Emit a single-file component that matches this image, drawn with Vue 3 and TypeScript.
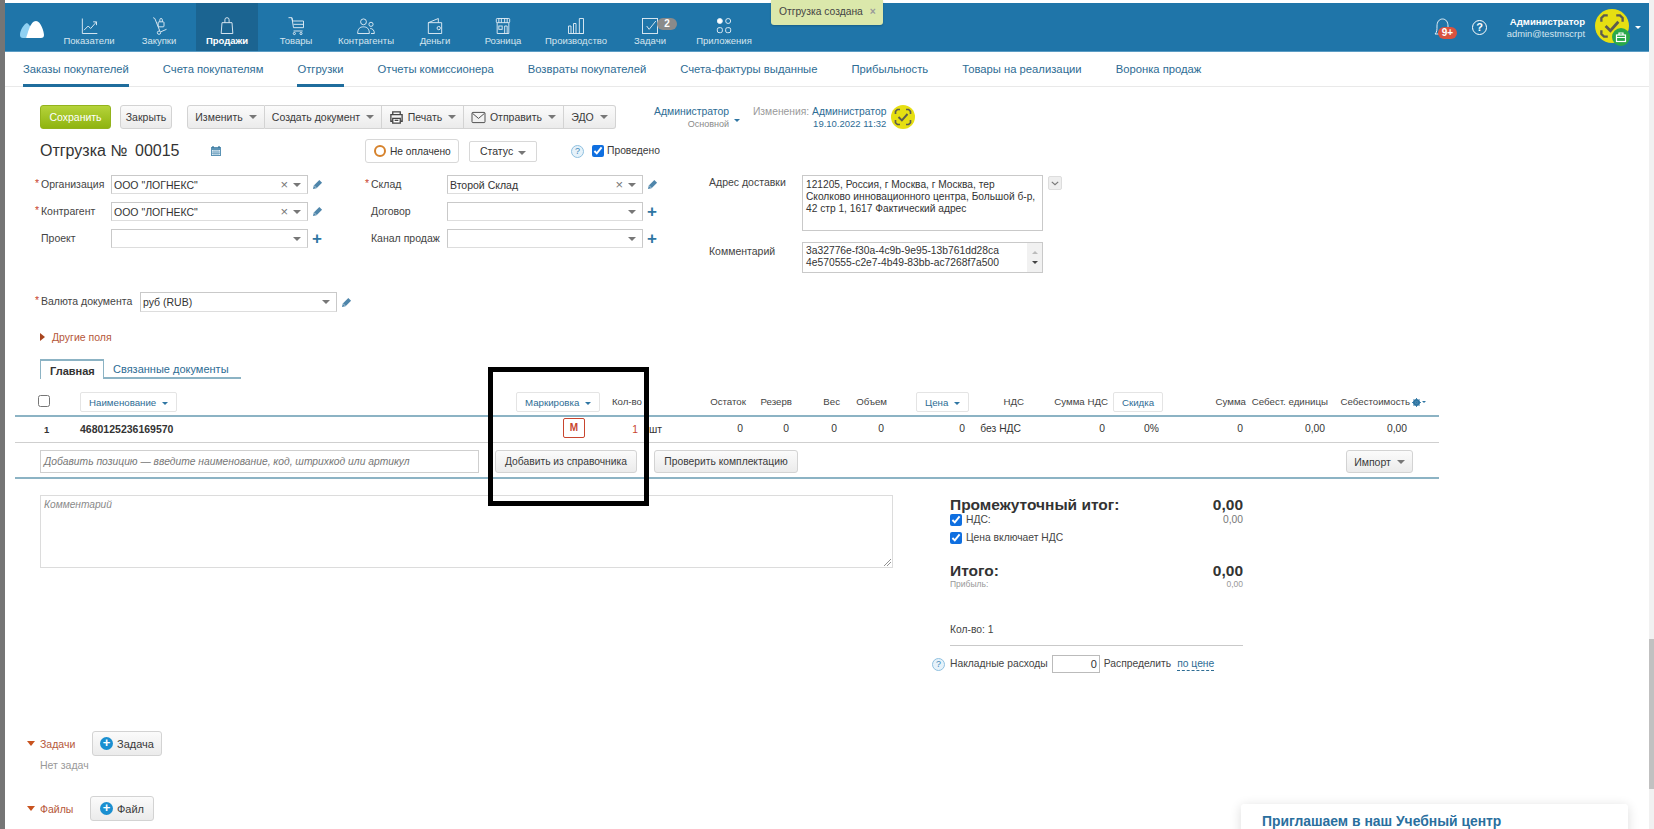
<script setup lang="ts">
const navItems = [
  { label: 'Показатели', icon: 'chart' },
  { label: 'Закупки', icon: 'truck' },
  { label: 'Продажи', icon: 'bag', active: true },
  { label: 'Товары', icon: 'cart' },
  { label: 'Контрагенты', icon: 'people' },
  { label: 'Деньги', icon: 'wallet' },
  { label: 'Розница', icon: 'store' },
  { label: 'Производство', icon: 'factory' },
  { label: 'Задачи', icon: 'task', badge: '2' },
  { label: 'Приложения', icon: 'apps' },
]
const subTabs = [
  { label: 'Заказы покупателей', active: true },
  { label: 'Счета покупателям' },
  { label: 'Отгрузки', active: true },
  { label: 'Отчеты комиссионера' },
  { label: 'Возвраты покупателей' },
  { label: 'Счета-фактуры выданные' },
  { label: 'Прибыльность' },
  { label: 'Товары на реализации' },
  { label: 'Воронка продаж' },
]
const leftFields = [
  { label: 'Организация', req: true, value: 'ООО "ЛОГНЕКС"', clear: true, action: 'edit' },
  { label: 'Контрагент', req: true, value: 'ООО "ЛОГНЕКС"', clear: true, action: 'edit' },
  { label: 'Проект', req: false, value: '', clear: false, action: 'add' },
]
const midFields = [
  { label: 'Склад', req: true, value: 'Второй Склад', clear: true, action: 'edit' },
  { label: 'Договор', req: false, value: '', clear: false, action: 'add' },
  { label: 'Канал продаж', req: false, value: '', clear: false, action: 'add' },
]
const rowCells = [
  { text: '0' }, { text: '0' }, { text: '0' }, { text: '0' }, { text: '0' }, { text: 'без НДС' },
  { text: '0' }, { text: '0%' }, { text: '0' }, { text: '0,00' }, { text: '0,00' },
]
</script>

<template>
  <div class="frame">
    <div class="edge"></div>
    <div class="main">
      <header class="topbar">
        <svg class="logo" viewBox="0 0 24 18" width="24" height="18">
          <path d="M0 15C0 10 4 4 7 3c2 1 3 3 4 5-2 4-3 8-5 10H3c-2 0-3-1-3-3z" fill="#8fd0f2" />
          <path d="M6 18c2-4 4-17 10-17 5 0 8 11 8 14 0 2-1 3-3 3z" fill="#fff" />
        </svg>
        <nav class="nav">
          <a v-for="item in navItems" :key="item.label" class="nav-item" :class="{ active: item.active }">
            <span class="nav-icon">
              <svg viewBox="0 0 24 24" width="20" height="20" fill="none" stroke="#e4eff6" stroke-width="1.100">
                <template v-if="item.icon === 'chart'">
                  <path d="M4 3v18h18" /><path d="M6 17l5-5 3 3 7-8M17 7h4v4" />
                </template>
                <template v-else-if="item.icon === 'truck'">
                  <path d="M5 2l2 1 6 15" /><circle cx="12" cy="20" r="2" /><path d="M14 19l7-3" />
                  <rect x="11" y="7" width="7" height="6" rx="1" /><path d="M13 7V4.500a1.500 1.500 0 0 1 3 0V7" />
                </template>
                <template v-else-if="item.icon === 'bag'">
                  <path d="M6 8h12l1 13H5z" /><path d="M9.500 8V4.500a2.500 2.500 0 0 1 5 0V8" />
                </template>
                <template v-else-if="item.icon === 'cart'">
                  <path d="M3 2h4l1 4h13v8H9L7 2" /><path d="M9 10h12M9 18h11" /><circle cx="10" cy="21" r="1.300" /><circle cx="18" cy="21" r="1.300" />
                </template>
                <template v-else-if="item.icon === 'people'">
                  <circle cx="9" cy="7" r="3.500" /><path d="M2 21c0-6 3-8 7-8s7 2 7 8z" />
                  <circle cx="18" cy="10" r="2.500" /><path d="M17 15c3 0 5 2 5 6h-4" />
                </template>
                <template v-else-if="item.icon === 'wallet'">
                  <path d="M4 8l12-5v5M4 8h16v13H4z" /><circle cx="16.500" cy="14.500" r="2" />
                </template>
                <template v-else-if="item.icon === 'store'">
                  <rect x="4" y="3" width="16" height="5" rx="1" /><path d="M7 3v5M10 3v5M14 3v5M17 3v5M5 8v13h14V8" />
                  <rect x="7" y="12" width="4" height="4" /><path d="M14 21v-9h3v9" />
                </template>
                <template v-else-if="item.icon === 'factory'">
                  <path d="M3 21V12h3v9M9 21V9h3v12M16 21V3h5v18zM3 21h18" />
                </template>
                <template v-else-if="item.icon === 'task'">
                  <rect x="3" y="3" width="18" height="18" /><path d="M8 12l3 4 8-10" />
                </template>
                <template v-else>
                  <circle cx="7" cy="6" r="3" fill="#fff" /><circle cx="17" cy="6" r="3" /><rect x="4" y="14" width="6" height="6" rx="2" /><rect x="14" y="14" width="6" height="6" rx="2" />
                </template>
              </svg>
              <span v-if="item.badge" class="nav-badge">{{ item.badge }}</span>
            </span>
            <span class="nav-label">{{ item.label }}</span>
          </a>
        </nav>
        <div class="user-area">
          <span class="bell">
            <svg viewBox="0 0 20 24" width="20" height="24" fill="none" stroke="#e4eff6" stroke-width="1">
              <path d="M2 19c2-2 2-4 2-8 0-4 2-7 5.500-7s5.500 3 5.500 7c0 4 0 6 2 8z" />
            </svg>
            <span class="bell-badge">9+</span>
          </span>
          <span class="help-white">?</span>
          <div class="user-text">
            <div class="user-name">Администратор</div>
            <div class="user-mail">admin@testmscrpt</div>
          </div>
          <span class="avatar-wrap">
            <svg viewBox="0 0 32 32" width="34" height="34">
              <circle cx="16" cy="16" r="16" fill="#e6df12" />
              <path d="M6 12V8.500L8.500 6H12M20 6h3.500L26 8.500V12M26 20v3.500L23.500 26H20M12 26H8.500L6 23.500V20" fill="none" stroke="#5c5c50" stroke-width="2.200" />
              <path d="M10 16l4.500 4.500L22 12" fill="none" stroke="#5c5c50" stroke-width="2.600" />
            </svg>
            <span class="gift">
              <svg viewBox="0 0 12 12" width="12" height="12" fill="none" stroke="#fff" stroke-width="1.200">
                <rect x="1.500" y="4" width="9" height="6.500" /><path d="M1.500 6.500h9M4 4V2h4v2" />
              </svg>
            </span>
          </span>
          <span class="caret-white"></span>
        </div>
      </header>

      <div class="subnav">
        <a v-for="t in subTabs" :key="t.label" class="subtab" :class="{ on: t.active }">{{ t.label }}</a>
      </div>

      <div class="toolbar">
        <button class="btn save">Сохранить</button>
        <button class="btn close">Закрыть</button>
        <div class="btn-group">
          <button class="btn seg w-change">Изменить <i class="tri"></i></button>
          <button class="btn seg w-create">Создать документ <i class="tri"></i></button>
          <button class="btn seg w-print">
            <svg viewBox="0 0 16 16" width="15" height="15" fill="none" stroke="#444" stroke-width="1.400">
              <path d="M4 5V2h8v3M4 12H2V5h12v7h-2" /><path d="M4 9h8v5H4z" fill="#fff" /><path d="M6 11h4" />
            </svg>
            Печать <i class="tri"></i>
          </button>
          <button class="btn seg w-send">
            <svg viewBox="0 0 16 14" width="15" height="13" fill="none" stroke="#444" stroke-width="1">
              <rect x="1" y="1.500" width="14" height="11" rx="1" /><path d="M1.500 2.500L8 8l6.500-5.500" />
            </svg>
            Отправить <i class="tri"></i>
          </button>
          <button class="btn seg w-edo">ЭДО <i class="tri"></i></button>
        </div>
        <div class="owner">
          <div class="link">Администратор</div>
          <div class="small">Основной</div>
        </div>
        <span class="caret-blue"></span>
        <div class="changes">
          <div><span class="gray">Изменения:</span> <span class="link">Администратор</span></div>
          <div class="date">19.10.2022 11:32</div>
        </div>
        <svg class="mini-avatar" viewBox="0 0 32 32" width="24" height="24">
          <circle cx="16" cy="16" r="16" fill="#e6df12" />
          <path d="M6 12V8.500L8.500 6H12M20 6h3.500L26 8.500V12M26 20v3.500L23.500 26H20M12 26H8.500L6 23.500V20" fill="none" stroke="#5c5c50" stroke-width="2.200" />
          <path d="M10 16l4.500 4.500L22 12" fill="none" stroke="#5c5c50" stroke-width="2.600" />
        </svg>
      </div>

      <div class="title-row">
        <div class="doc-title">Отгрузка №</div>
        <div class="doc-num">00015</div>
        <svg class="cal" viewBox="0 0 12 12" width="12" height="12">
          <path d="M1 2h10v9H1z" fill="#5b93b5" /><path d="M3 1v2M9 1v2" stroke="#2f6f95" stroke-width="1.200" />
          <path d="M2 5h8v5H2z" fill="#dcebf4" /><path d="M4 5v5M6 5v5M8 5v5M2 7h8M2 8.500h8" stroke="#5b93b5" stroke-width=".6" />
        </svg>
        <button class="pay"><i class="ring"></i>Не оплачено</button>
        <button class="status">Статус <i class="tri"></i></button>
        <span class="help">?</span>
        <input class="chk post-chk" type="checkbox" checked />
        <span class="posted">Проведено</span>
      </div>

      <div class="form">
        <div class="col-left">
          <div v-for="f in leftFields" :key="f.label" class="frow">
            <label class="flabel"><i v-if="f.req" class="star">*</i>{{ f.label }}</label>
            <div class="select">
              <span class="val">{{ f.value }}</span>
              <span v-if="f.clear" class="x">×</span>
              <i class="tri"></i>
            </div>
            <svg v-if="f.action === 'edit'" class="act" viewBox="0 0 12 12" width="11" height="11">
              <path d="M1 11l1-4 6-6 3 3-6 6z" fill="#4f86ab" /><path d="M2 7l3 3" stroke="#fff" stroke-width=".6" />
            </svg>
            <span v-else class="plus">+</span>
          </div>
        </div>
        <div class="col-mid">
          <div v-for="f in midFields" :key="f.label" class="frow">
            <label class="flabel"><i v-if="f.req" class="star">*</i>{{ f.label }}</label>
            <div class="select">
              <span class="val">{{ f.value }}</span>
              <span v-if="f.clear" class="x">×</span>
              <i class="tri"></i>
            </div>
            <svg v-if="f.action === 'edit'" class="act" viewBox="0 0 12 12" width="11" height="11">
              <path d="M1 11l1-4 6-6 3 3-6 6z" fill="#4f86ab" /><path d="M2 7l3 3" stroke="#fff" stroke-width=".6" />
            </svg>
            <span v-else class="plus">+</span>
          </div>
        </div>
        <div class="col-right">
          <div class="rrow addr">
            <label class="rlabel">Адрес доставки</label>
            <div class="area">121205, Россия, г Москва, г Москва, тер Сколково инновационного центра, Большой б-р, 42 стр 1, 1617 Фактический адрес</div>
            <button class="mini-down"><svg viewBox="0 0 10 6" width="8" height="5" fill="none" stroke="#777" stroke-width="1.500"><path d="M1 1l4 3.500L9 1" /></svg></button>
          </div>
          <div class="rrow cmt">
            <label class="rlabel">Комментарий</label>
            <div class="area mono">
              <span>3a32776e-f30a-4c9b-9e95-13b761dd28ca<br />4e570555-c2e7-4b49-83bb-ac7268f7a500</span>
              <span class="bar"><i class="up"></i><i class="down"></i></span>
            </div>
          </div>
        </div>
      </div>

      <div class="currency">
        <label class="flabel cur-label"><i class="star">*</i>Валюта документа</label>
        <div class="select cur-select"><span class="val">руб (RUB)</span><i class="tri"></i></div>
        <svg class="act" viewBox="0 0 12 12" width="11" height="11">
          <path d="M1 11l1-4 6-6 3 3-6 6z" fill="#4f86ab" /><path d="M2 7l3 3" stroke="#fff" stroke-width=".6" />
        </svg>
      </div>

      <div class="others"><i class="tri-right"></i>Другие поля</div>

      <div class="tabs">
        <div class="tab on">Главная</div>
        <div class="tab">Связанные документы</div>
      </div>

      <div class="table">
        <div class="grid thead">
          <div class="c-check"><input class="chk head-chk" type="checkbox" /></div>
          <div><button class="th-btn name-btn">Наименование <i class="tri-blue"></i></button></div>
          <div><button class="th-btn mark-btn">Маркировка <i class="tri-blue"></i></button></div>
          <div class="r qty-head">Кол-во</div>
          <div></div>
          <div class="r">Остаток</div>
          <div class="r">Резерв</div>
          <div class="r">Вес</div>
          <div class="r">Объем</div>
          <div class="r"><button class="th-btn price-btn">Цена <i class="tri-blue"></i></button></div>
          <div class="r">НДС</div>
          <div class="r">Сумма НДС</div>
          <div class="r"><button class="th-btn disc-btn">Скидка</button></div>
          <div class="r">Сумма</div>
          <div class="r">Себест. единицы</div>
          <div class="r">Себестоимость</div>
          <div class="gear">
            <svg viewBox="0 0 12 12" width="9" height="9"><circle cx="6" cy="6" r="3.500" fill="none" stroke="#2f76a3" stroke-width="2.500" /><path d="M6 0v12M0 6h12M2 2l8 8M10 2l-8 8" stroke="#2f76a3" stroke-width="1.200" /></svg>
            <i class="tri-tiny"></i>
          </div>
        </div>
        <div class="grid tbody">
          <div class="num">1</div>
          <div class="pname">4680125236169570</div>
          <div class="mark-cell"><span class="mark">М</span></div>
          <div class="r qty">1</div>
          <div class="unit">шт</div>
          <div v-for="(c, i) in rowCells" :key="i" class="r val-cell">{{ c.text }}</div>
          <div></div>
        </div>
        <div class="add-row">
          <div class="add-input">Добавить позицию — введите наименование, код, штрихкод или артикул</div>
          <button class="btn add-btn">Добавить из справочника</button>
          <button class="btn check-btn">Проверить комплектацию</button>
          <button class="btn import-btn">Импорт <i class="tri"></i></button>
        </div>
      </div>

      <div class="lower">
        <div class="comment">Комментарий
          <svg class="grip" viewBox="0 0 8 8" width="8" height="8" fill="none" stroke="#777" stroke-width=".8"><path d="M1 8l7-7M4 8l4-4" /></svg>
        </div>
        <div class="totals">
          <div class="t-head first"><span>Промежуточный итог:</span><span>0,00</span></div>
          <div class="t-row nds"><span class="t-lab"><input class="chk" type="checkbox" checked />НДС:</span><span class="muted">0,00</span></div>
          <div class="t-row inc"><span class="t-lab"><input class="chk" type="checkbox" checked />Цена включает НДС</span></div>
          <div class="t-head total"><span>Итого:</span><span>0,00</span></div>
          <div class="t-profit"><span>Прибыль:</span><span>0,00</span></div>
          <div class="t-count">Кол-во: 1</div>
          <div class="t-over">
            <span class="help over-help">?</span>
            <span>Накладные расходы</span>
            <span class="over-input">0</span>
            <span>Распределить</span>
            <span class="dashed">по цене</span>
          </div>
        </div>
      </div>

      <div class="section task-sec">
        <span class="sec-title"><i class="tri-down"></i>Задачи</span>
        <button class="btn sec-btn task-btn"><i class="plus-circle">+</i>Задача</button>
      </div>
      <div class="none">Нет задач</div>
      <div class="section file-sec">
        <span class="sec-title"><i class="tri-down"></i>Файлы</span>
        <button class="btn sec-btn file-btn"><i class="plus-circle">+</i>Файл</button>
      </div>
    </div>
    <div class="scrollbar"><div class="thumb"></div></div>

    <div class="toast">Отгрузка создана <span class="toast-x">×</span></div>
    <div class="highlight"></div>
    <div class="promo">Приглашаем в наш Учебный центр</div>
  </div>
</template>

<style>
html, body { margin: 0; padding: 0; background: #fff; overflow: hidden; }
</style>

<style scoped>
* { box-sizing: border-box; }
.frame { position: relative; display: flex; width: 1654px; height: 829px; overflow: hidden; background: #fff; font: 10.500px/14px "Liberation Sans", Arial, sans-serif; color: #3a3a3a; }
.edge { width: 5px; flex: none; background: #757575; }
.main { flex: 1; min-width: 0; padding-top: 3px; }
.scrollbar { width: 5px; flex: none; background: #f1f1f1; display: flex; flex-direction: column; justify-content: flex-end; padding-bottom: 40px; }
.thumb { height: 150px; background: #c1c1c1; }

.topbar { display: flex; align-items: stretch; height: 49px; background: #1f75a9; border-bottom: 1px solid #5b9cc4; }
.logo { margin: 17px 10px 0 15px; flex: none; }
.nav { display: grid; grid-template-columns: 70px 70px 66px 72px 68px 70px 66px 80px 68px 80px; }
.nav-item { display: flex; flex-direction: column; align-items: center; color: #d5e5ef; font-size: 9.500px; line-height: 12px; padding-top: 13px; }
.nav-item.active { width: 62px; justify-self: center; background: #1b6491; color: #fff; font-weight: bold; }
.nav-icon { position: relative; height: 20px; margin-bottom: -1px; }
.nav-badge { position: absolute; left: 17px; top: 2px; width: 20px; height: 12px; border-radius: 6px; background: #8a8a8a; color: #fff; font-size: 10px; font-weight: bold; line-height: 12px; text-align: center; }

.user-area { margin-left: auto; display: flex; align-items: center; color: #fff; }
.bell { position: relative; width: 20px; height: 24px; margin-right: 19px; }
.bell-badge { position: absolute; left: 5px; top: 12px; width: 19px; height: 12px; border-radius: 6px; background: #d9533f; color: #fff; font-size: 10px; font-weight: bold; line-height: 12px; text-align: center; }
.help-white { width: 15px; height: 15px; border: 1px solid #fff; border-radius: 50%; font-size: 11px; line-height: 13px; text-align: center; font-weight: bold; margin-right: 15px; }
.user-text { text-align: right; width: 83px; margin-right: 10px; white-space: nowrap; }
.user-name { font-size: 9.600px; font-weight: bold; line-height: 13px; }
.user-mail { font-size: 9.400px; line-height: 11px; color: #d5e5ef; }
.avatar-wrap { position: relative; width: 34px; height: 34px; margin-top: -2px; }
.gift { position: absolute; left: 17px; top: 19px; width: 18px; height: 18px; border-radius: 50%; background: #2aa84a; display: flex; align-items: center; justify-content: center; }
.caret-white { width: 0; height: 0; border: 3px solid transparent; border-top-color: #fff; border-bottom: 0; margin: 0 8px 0 6px; }

.subnav { display: flex; gap: 34px; height: 35px; padding-left: 18px; border-bottom: 1px solid #e9e9e9; }
.subtab { height: 35px; padding-top: 10px; font-size: 11.250px; color: #2d6c94; white-space: nowrap; }
.subtab.on { border-bottom: 3px solid #1f6d9d; }

.toolbar { display: flex; align-items: flex-start; margin: 18px 0 0 35px; height: 24px; }
.btn { height: 24px; border: 1px solid #d3d3d3; border-radius: 3px; background: linear-gradient(#fbfbfb, #ebebeb); color: #3a3a3a; font: 10.500px "Liberation Sans", Arial, sans-serif; padding: 0; display: inline-flex; align-items: center; justify-content: center; gap: 4px; white-space: nowrap; }
.save { width: 71px; background: linear-gradient(#b5d33a, #8fb410); border-color: #93b31c; color: #fff; }
.close { width: 52px; margin-left: 9px; }
.btn-group { display: flex; margin-left: 15px; }
.seg { border-radius: 0; border-left: 0; }
.seg:first-child { border-left: 1px solid #d3d3d3; border-radius: 3px 0 0 3px; }
.seg:last-child { border-radius: 0 3px 3px 0; }
.w-change { width: 78px; } .w-create { width: 117px; } .w-print { width: 82px; } .w-send { width: 100px; } .w-edo { width: 52px; }
.tri { display: inline-block; width: 0; height: 0; border: 4px solid transparent; border-top-color: #777; border-bottom: 0; margin-left: 2px; }
.tri-blue { display: inline-block; width: 0; height: 0; border: 3px solid transparent; border-top-color: #2f76a3; border-bottom: 0; margin-left: 3px; vertical-align: 1px; }
.owner { margin-left: 38px; text-align: right; font-size: 10.400px; }
.link { color: #2d6c94; }
.small { font-size: 9px; line-height: 11px; color: #8a8a8a; }
.gray { color: #9a9a9a; }
.caret-blue { width: 0; height: 0; border: 3px solid transparent; border-top-color: #2f76a3; border-bottom: 0; margin: 14px 0 0 5px; }
.changes { margin-left: 13px; text-align: right; line-height: 13px; font-size: 10.300px; white-space: nowrap; }
.date { font-size: 9.500px; line-height: 11px; color: #2d6c94; }
.mini-avatar { margin-left: 5px; flex: none; }

.title-row { display: flex; align-items: center; height: 24px; margin: 10px 0 0 35px; }
.doc-title { font-size: 16px; color: #333; width: 95px; white-space: nowrap; }
.doc-num { font-size: 16px; color: #333; width: 75px; }
.cal { margin-right: 143px; }
.pay { width: 94px; height: 24px; border: 1px solid #d8d8d8; border-radius: 3px; background: #fff; color: #333; font: 10.200px "Liberation Sans", Arial, sans-serif; display: flex; align-items: center; padding: 0 0 0 8px; white-space: nowrap; }
.ring { width: 12px; height: 12px; border: 2px solid #d6822c; border-radius: 50%; margin-right: 4px; flex: none; }
.status { width: 68px; height: 21px; margin-left: 10px; border: 1px solid #d8d8d8; border-radius: 2px; background: #fff; color: #333; font: 10.500px "Liberation Sans", Arial, sans-serif; }
.help { width: 13px; height: 13px; border: 1px solid #8fc0e0; border-radius: 50%; background: #e6f2fa; color: #3f87b8; font-size: 9px; line-height: 11px; text-align: center; flex: none; }
.title-row .help { margin-left: 34px; }
.chk { margin: 0; width: 12px; height: 12px; flex: none; accent-color: #0f6fe0; }
.post-chk { margin-left: 8px; }
.posted { margin-left: 3px; font-size: 10.300px; }

.form { display: flex; margin: 12px 0 0 30px; }
.col-left { width: 330px; display: flex; flex-direction: column; gap: 8px; }
.col-mid { width: 344px; display: flex; flex-direction: column; gap: 8px; }
.frow { display: flex; align-items: center; height: 19px; }
.flabel { position: relative; display: block; padding-left: 6px; white-space: nowrap; color: #444; margin-top: -2px; }
.star { position: absolute; left: 0; top: -1px; color: #c8452e; font-style: normal; }
.col-left .flabel { width: 76px; }
.col-mid .flabel { width: 82px; }
.select { display: flex; align-items: center; height: 19px; border: 1px solid #c9c9c9; border-bottom-color: #ddd; padding: 0 6px 0 2px; background: #fff; color: #333; }
.col-left .select { width: 197px; }
.col-mid .select { width: 196px; }
.val { flex: 1; white-space: nowrap; }
.x { color: #777; font-size: 13px; margin-right: 3px; }
.act { margin-left: 4px; flex: none; }
.plus { margin-left: 4px; color: #2f76a3; font-size: 17px; font-weight: bold; line-height: 17px; }
.col-right { display: flex; flex-direction: column; gap: 11px; }
.rrow { display: flex; align-items: flex-start; }
.rlabel { width: 93px; color: #444; padding-top: 0; }
.area { width: 241px; height: 56px; border: 1px solid #c9c9c9; padding: 3px 3px; font-size: 10.200px; line-height: 12px; color: #333; }
.mini-down { width: 14px; height: 14px; margin: 1px 0 0 5px; border: 1px solid #ddd; border-radius: 2px; background: #eee; padding: 0; display: flex; align-items: center; justify-content: center; }
.rrow.cmt .rlabel { padding-top: 2px; }
.area.mono { display: flex; justify-content: space-between; height: 31px; padding: 2px 0 0 3px; font-size: 10.300px; }
.bar { width: 15px; height: 29px; margin-top: -2px; background: #f1f1f1; display: flex; flex-direction: column; align-items: center; justify-content: space-around; padding: 4px 0; }
.up { width: 0; height: 0; border: 3px solid transparent; border-bottom-color: #bbb; border-top: 0; }
.down { width: 0; height: 0; border: 3px solid transparent; border-top-color: #444; border-bottom: 0; }

.currency { display: flex; align-items: center; height: 20px; margin: 19px 0 0 30px; }
.cur-label { width: 105px; }
.cur-select { width: 197px; height: 20px; }
.others { display: flex; align-items: center; height: 14px; margin: 18px 0 0 35px; color: #b5573a; }
.tri-right { width: 0; height: 0; border: 4px solid transparent; border-left: 5px solid #a8451f; border-right: 0; margin-right: 7px; }

.tabs { display: flex; width: 201px; height: 20px; margin: 15px 0 0 35px; border-bottom: 0; }
.tab { font-size: 11px; height: 20px; line-height: 21px; padding: 0 11px 0 9px; color: #2d6c94; border-bottom: 2px solid #8cb3c4; flex: 1; white-space: nowrap; }
.tab.on { flex: none; width: 64px; color: #333; font-weight: bold; border: 1px solid #8cb3c4; border-top-width: 2px; border-bottom: 0; }

.table { width: 1424px; margin: 13px 0 0 10px; }
.grid { display: grid; grid-template-columns: 65px 436px 84px 42px 58px 48px 46px 48px 47px 81px 56px 84px 54px 84px 82px 82px 27px; }
.thead { height: 25px; align-items: start; border-bottom: 2px solid #8cb3c4; font-size: 9.700px; line-height: 20px; color: #444; }
.r { text-align: right; padding-right: 2px; white-space: nowrap; }
.qty-head { padding-right: 0; }
.c-check { padding: 3px 0 0 23px; }
.head-chk { display: block; }
.th-btn { height: 20px; border: 1px solid #e4e4e4; border-radius: 2px; background: #fff; color: #2d6c94; font: 9.700px "Liberation Sans", Arial, sans-serif; padding: 0; white-space: nowrap; }
.name-btn { width: 97px; }
.mark-btn { width: 84px; }
.price-btn { width: 53px; margin-right: -1px; }
.disc-btn { width: 50px; margin-right: -1px; }
.gear { display: flex; align-items: center; gap: 1px; height: 20px; }
.tri-tiny { width: 0; height: 0; border: 2.500px solid transparent; border-top-color: #2f76a3; border-bottom: 0; }
.tbody { height: 26px; align-items: center; border-bottom: 1px solid #cfcfcf; font-size: 10.300px; color: #333; }
.num { padding-left: 29px; font-weight: bold; font-size: 9.500px; }
.pname { font-weight: bold; font-size: 10.500px; margin-top: -2px; }
.mark-cell { padding-left: 47px; }
.mark { display: block; width: 22px; height: 20px; margin-top: -3px; border: 1px solid #c8452e; border-radius: 2px; color: #c8452e; font-weight: bold; font-size: 10px; line-height: 17px; text-align: center; }
.qty { color: #c8452e; padding-right: 4px; }
.unit { padding-left: 7px; }
.val-cell { padding-right: 5px; margin-top: -1px; }
.add-row { display: flex; height: 36px; padding: 7px 0 0 25px; border-bottom: 2px solid #8cb3c4; }
.add-input { width: 439px; height: 23px; border: 1px solid #cfcfcf; padding: 4px 3px; font-size: 10.300px; line-height: 14px; font-style: italic; color: #777; white-space: nowrap; }
.add-btn { width: 142px; height: 23px; margin-left: 16px; font-size: 10.300px; }
.check-btn { width: 144px; height: 23px; margin-left: 17px; font-size: 10.300px; }
.import-btn { width: 67px; height: 23px; margin-left: 548px; }

.lower { display: flex; align-items: flex-start; margin: 16px 0 0 35px; }
.comment { position: relative; width: 853px; height: 73px; border: 1px solid #dcdcdc; padding: 2px 3px; font-style: italic; font-size: 10.200px; color: #8a8a8a; }
.grip { position: absolute; right: 1px; bottom: 1px; }
.totals { width: 293px; margin-left: 57px; margin-top: 1px; color: #333; }
.t-head { display: flex; justify-content: space-between; font-size: 15.500px; font-weight: bold; line-height: 18px; }
.t-head.first { margin-bottom: -2px; }
.t-row { display: flex; justify-content: space-between; align-items: center; height: 15px; font-size: 10.300px; color: #444; }
.t-lab { display: flex; align-items: center; gap: 4px; }
.muted { color: #777; }
.t-row.inc { margin-top: 3px; }
.t-head.total { margin-top: 17px; }
.t-profit { display: flex; justify-content: space-between; font-size: 8.500px; line-height: 10px; color: #999; margin-top: -1px; }
.t-count { margin-top: 34px; height: 23px; font-size: 10.300px; border-bottom: 1px solid #c9c9c9; line-height: 14px; color: #444; }
.t-over { display: flex; align-items: center; gap: 4px; height: 18px; margin-top: 9px; white-space: nowrap; font-size: 10.300px; color: #444; }
.over-help { margin-left: -18px; margin-right: 1px; }
.over-input { width: 48px; height: 18px; border: 1px solid #bbb; text-align: right; padding-right: 2px; font-size: 11px; line-height: 16px; color: #333; }
.dashed { margin-left: 2px; color: #2d6c94; border-bottom: 1px dashed #2d6c94; line-height: 12px; }

.section { display: flex; align-items: center; margin-left: 22px; }
.task-sec { margin-top: 58px; }
.file-sec { margin-top: 24px; }
.sec-title { width: 65px; display: flex; align-items: center; color: #b5573a; font-size: 10.500px; }
.file-sec .sec-title { width: 63px; }
.tri-down { width: 0; height: 0; border: 4px solid transparent; border-top: 5px solid #c8531f; border-bottom: 0; margin-right: 5px; }
.sec-btn { height: 25px; gap: 4px; font-size: 11px; }
.task-btn { width: 70px; }
.file-btn { width: 64px; }
.plus-circle { width: 13px; height: 13px; border-radius: 50%; background: #1a8fd0; color: #fff; font-style: normal; font-weight: bold; font-size: 13px; line-height: 12px; text-align: center; }
.none { margin: 2px 0 0 35px; color: #999; height: 14px; font-size: 10.500px; }

.toast { position: absolute; left: 771px; top: 0; width: 112px; height: 25px; border-radius: 0 0 3px 3px; background: #dbe8ab; box-shadow: 0 1px 2px rgba(0,0,0,.2); padding: 5px 0 0 8px; color: #444; font-size: 10.300px; white-space: nowrap; }
.toast-x { margin-left: 4px; color: #999; font-weight: bold; }
.highlight { position: absolute; left: 488px; top: 367px; width: 161px; height: 139px; border: 5px solid #000; }
.promo { position: absolute; left: 1241px; top: 804px; width: 387px; height: 60px; padding: 10px 21px; border-radius: 3px; background: #fff; box-shadow: 0 2px 12px rgba(0,0,0,.14); color: #2a6f9e; font-size: 13.900px; line-height: 14px; font-weight: bold; }
</style>
